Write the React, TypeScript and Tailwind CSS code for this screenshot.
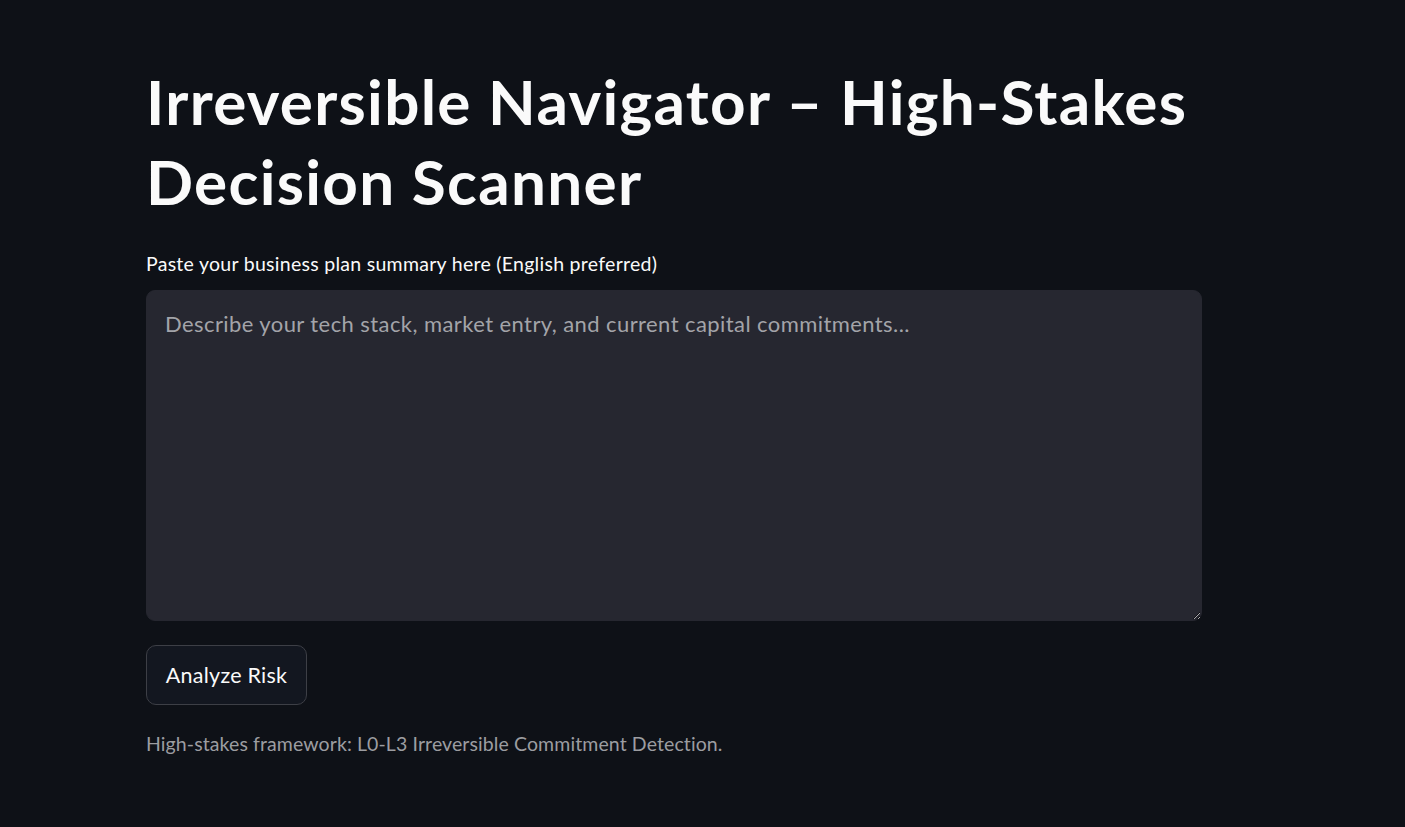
import React from 'react';

const App: React.FC = () => {
  return (
    <div
      className="min-h-screen w-full bg-[#0e1117] text-[#fafafa]"
      style={{ fontFamily: 'Lato, "Noto Sans", sans-serif' }}
    >
      <div className="pl-[146px] pt-[61px] w-[1202px]">
        {/* Title */}
        <h1 className="text-[62px] leading-[80px] font-bold tracking-[1.3px] text-[#fafafa]">
          Irreversible Navigator – High-Stakes
          <br />
          Decision Scanner
        </h1>

        {/* Text area block */}
        <div className="mt-[31px]">
          <label className="block text-[19.5px] leading-[24px] tracking-[0.28px] text-[#fafafa]">
            Paste your business plan summary here (English preferred)
          </label>
          <textarea
            className="mt-[14px] block w-[1056px] h-[331px] rounded-[9px] bg-[#262730] border border-[#262730] pt-[15px] px-[18px] text-[22px] leading-[1.6] tracking-[0.42px] text-[#fafafa] placeholder:text-[#a3a4a9] outline-none [color-scheme:dark]"
            style={{ fontFamily: 'Lato, "Noto Sans", sans-serif' }}
            placeholder="Describe your tech stack, market entry, and current capital commitments..."
          />
        </div>

        {/* Action */}
        <button
          className="mt-[24px] flex items-center justify-center w-[161px] h-[60px] rounded-[10px] border border-[#3d3f46] bg-[#131720] text-[21.5px] tracking-[0.25px] text-[#fafafa]"
          style={{ fontFamily: 'Lato, "Noto Sans", sans-serif' }}
        >
          Analyze Risk
        </button>

        <p className="mt-[24px] text-[19.5px] leading-[30px] tracking-[0.1px] text-[#9c9da1]">
          High-stakes framework: L0-L3 Irreversible Commitment Detection.
        </p>
      </div>
    </div>
  );
};

export default App;
